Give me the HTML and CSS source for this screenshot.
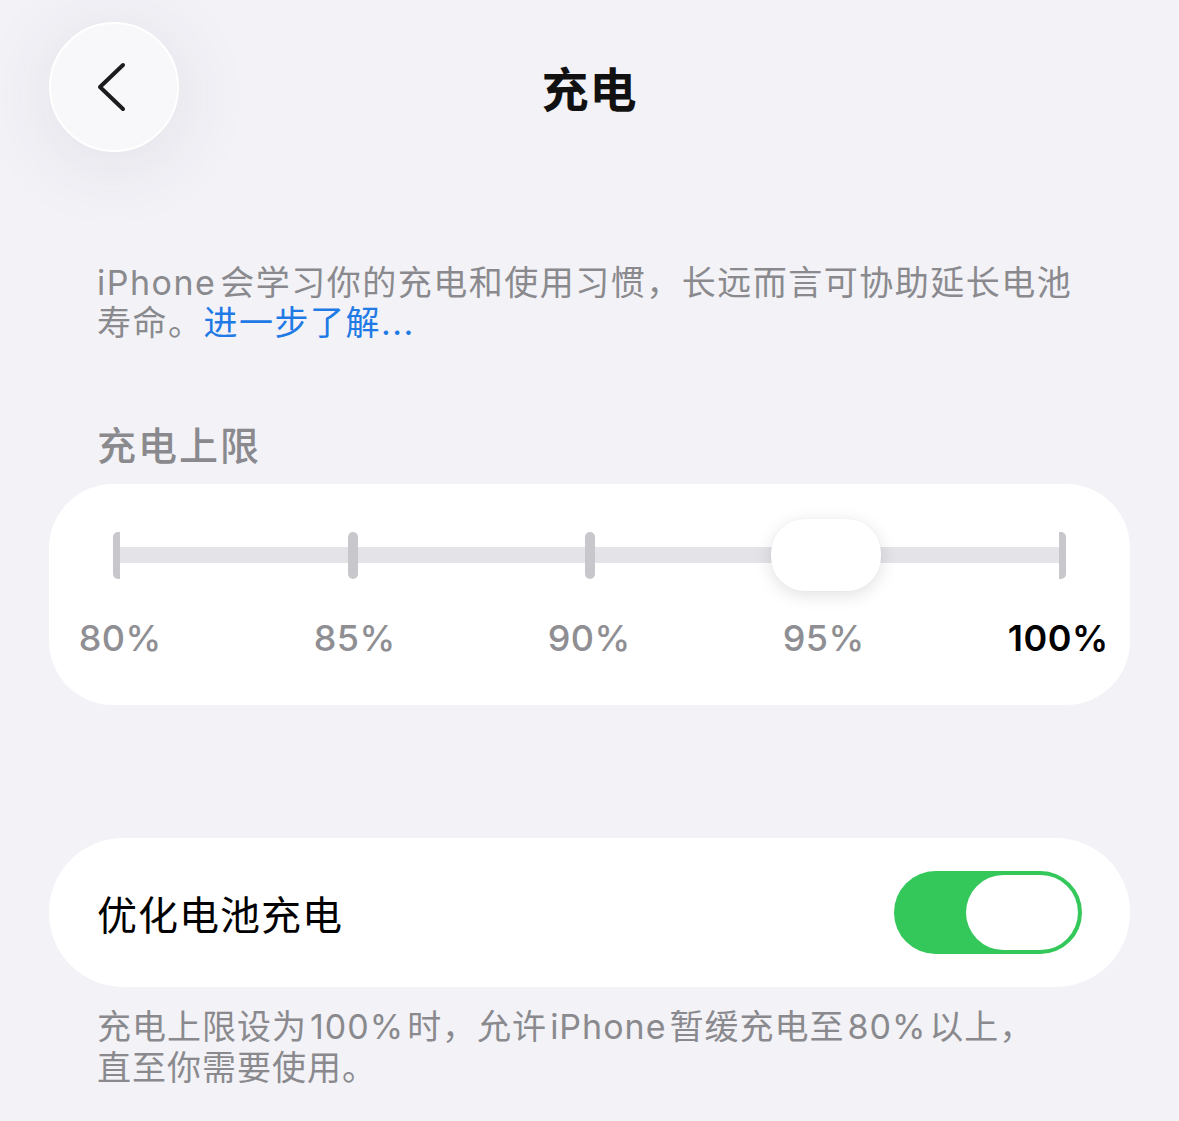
FILE: index.html
```html
<!DOCTYPE html>
<html lang="zh-CN">
<head>
<meta charset="utf-8">
<title>充电</title>
<link rel="stylesheet" href="styles.css">
</head>
<body>
<div class="screen">
  <header class="nav">
    <button class="back" aria-label="返回">
      <svg class="chev" width="30" height="50" viewBox="0 0 30 50">
        <path d="M26 3 L3 25 L26 47" fill="none" stroke="#1c1c1e" stroke-width="4" stroke-linecap="round" stroke-linejoin="round"/>
      </svg>
    </button>
    <h1 class="title">充电</h1>
    <span></span>
  </header>

  <p class="note intro"><span class="latin">iPhone</span>会学习你的充电和使用习惯，长远而言可协助延长电池寿命。<a class="link" href="#">进一步了解...</a></p>

  <h2 class="section-head">充电上限</h2>

  <section class="card limit-card">
    <div class="track">
      <div class="rail">
        <span class="tick tick-start"></span>
        <span class="tick" style="--p:0.25"></span>
        <span class="tick" style="--p:0.5"></span>
        <span class="tick" style="--p:0.75"></span>
        <span class="tick tick-end"></span>
      </div>
      <span class="thumb" style="--p:0.75"></span>
    </div>
    <div class="labels">
      <span>80%</span>
      <span>85%</span>
      <span>90%</span>
      <span>95%</span>
      <span class="current">100%</span>
    </div>
  </section>

  <section class="card toggle-card">
    <span class="row-label">优化电池充电</span>
    <span class="switch on"><span class="knob"></span></span>
  </section>

  <p class="note footer">充电上限设为<span class="latin">100%</span>时，允许<span class="latin">iPhone</span>暂缓充电至<span class="latin">80%</span>以上，直至你需要使用。</p>
</div>
</body>
</html>
```

FILE: styles.css
```css
html, body {
  margin: 0;
  padding: 0;
  background: #f2f2f7;
}

.screen {
  width: 1179px;
  height: 1121px;
  overflow: hidden;
  font-family: Inter, "Noto Sans CJK SC", sans-serif;
  color: #111;
}

/* navigation bar */
.nav {
  display: grid;
  grid-template-columns: 1fr auto 1fr;
  align-items: center;
  padding: 22px 49px 0;
  height: 130px;
}

.back {
  width: 130px;
  height: 130px;
  border-radius: 50%;
  border: 2px solid #ffffff;
  background: #f8f8fa;
  box-shadow: 0 10px 80px rgba(60, 60, 80, 0.10);
  display: flex;
  align-items: center;
  justify-content: center;
  padding: 0 4px 0 0;
  box-sizing: border-box;
}

.title {
  margin: 0;
  font-size: 47px;
  font-weight: 700;
  line-height: 56px;
  letter-spacing: 1px;
  color: #111;
  font-family: "Noto Sans CJK SC", sans-serif;
}

/* grey explanatory text */
.note {
  margin: 0;
  padding: 0 97px;
  font-size: 34px;
  line-height: 40px;
  letter-spacing: 1.5px;
  color: #8a8a8e;
}

/* Latin runs get a little air next to the CJK text */
.latin {
  margin: 0 4px;
}

.intro .latin:first-child {
  margin-left: 0;
}

.intro {
  margin-top: 111px;
}

.link {
  color: #1f7ae6;
  text-decoration: none;
}

.section-head {
  margin: 77px 0 0;
  padding: 0 97px;
  font-size: 39px;
  line-height: 46px;
  font-weight: 500;
  letter-spacing: 2px;
  color: #8a8a8e;
  font-family: "Noto Sans CJK SC", sans-serif;
}

.card {
  margin: 0 49px;
  background: #ffffff;
  border-radius: 64px;
}

/* charge limit slider */
.limit-card {
  margin-top: 18px;
  height: 221px;
  box-sizing: border-box;
  padding: 35px 64px 0;
}

.track {
  position: relative;
  height: 72px;
  display: flex;
  align-items: center;
}

.rail {
  position: relative;
  width: 100%;
  height: 47px;
  background: linear-gradient(#e3e3e8, #e3e3e8) center / calc(100% - 14px) 16px no-repeat;
}

.tick {
  position: absolute;
  top: 0;
  left: calc(3.5px + (100% - 7px) * var(--p, 0));
  width: 10px;
  height: 47px;
  margin-left: -5px;
  border-radius: 5px;
  background: #c7c7cc;
}

.tick-start {
  left: 0;
  margin-left: 0;
  width: 7px;
  border-radius: 5px 0 0 5px;
}

.tick-end {
  left: auto;
  right: 0;
  margin-left: 0;
  width: 7px;
  border-radius: 0 5px 5px 0;
}

.thumb {
  position: absolute;
  top: 0;
  left: calc(3.5px + (100% - 7px) * var(--p, 0));
  width: 110px;
  height: 72px;
  margin-left: -55px;
  border-radius: 34px;
  background: #ffffff;
  box-shadow: 0 4px 18px rgba(0, 0, 0, 0.12), 0 0 2px rgba(0, 0, 0, 0.04);
}

.labels {
  display: grid;
  grid-template-columns: repeat(5, 234.5px);
  margin: 25px 0 0 -110px;
  font-size: 36px;
  line-height: 44px;
  font-weight: 500;
  letter-spacing: 0.5px;
  color: #8e8e93;
  text-align: center;
}

.labels .current {
  color: #000;
  font-weight: 600;
}

/* optimised charging row */
.toggle-card {
  margin-top: 133px;
  height: 149px;
  border-radius: 74px;
  display: flex;
  align-items: center;
  justify-content: space-between;
  padding: 0 48px;
}

.row-label {
  font-size: 40px;
  line-height: 48px;
  letter-spacing: 1px;
  color: #000;
  font-family: "Noto Sans CJK SC", sans-serif;
}

.switch {
  width: 188px;
  height: 83px;
  border-radius: 42px;
  background: #34c759;
  display: flex;
  align-items: center;
  justify-content: flex-end;
  padding: 4px;
  box-sizing: border-box;
}

.knob {
  width: 112px;
  height: 75px;
  border-radius: 38px;
  background: #ffffff;
}

.footer {
  margin-top: 19px;
  padding-right: 117px;
  line-height: 41px;
  letter-spacing: 1px;
}

.footer .latin {
  margin: 0 3px;
}
```
